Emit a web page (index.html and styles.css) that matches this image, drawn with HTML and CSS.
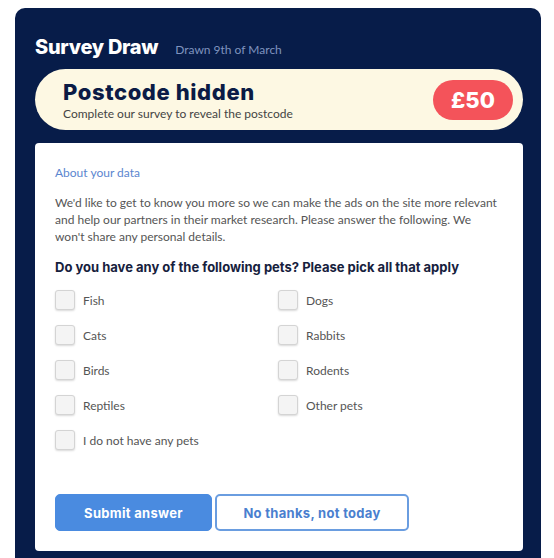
FILE: index.html
```html
<!DOCTYPE html>
<html lang="en">
<head>
    <meta charset="UTF-8">
    <meta name="viewport" content="width=device-width, initial-scale=1.0">
    <title>Survey Draw</title>
    <link rel="stylesheet" href="styles.css">
</head>
<body>

    <div class="panel">
        <div class="panel-header">
            <h2>Survey Draw</h2>
            <span class="drawn">Drawn 9th of March</span>
        </div>

        <div class="prize">
            <div class="prize-text">
                <h3>Postcode hidden</h3>
                <p>Complete our survey to reveal the postcode</p>
            </div>
            <div class="amount">£50</div>
        </div>

        <div class="card">
            <p class="about">About your data</p>
            <p class="intro">We'd like to get to know you more so we can make the ads on the site more relevant and help our partners in their market research. Please answer the following. We won't share any personal details.</p>

            <h4>Do you have any of the following pets? Please pick all that apply</h4>

            <form id="survey-form">
                <div class="options">
                    <label class="option"><input type="checkbox"><span class="box"></span>Fish</label>
                    <label class="option"><input type="checkbox"><span class="box"></span>Dogs</label>
                    <label class="option"><input type="checkbox"><span class="box"></span>Cats</label>
                    <label class="option"><input type="checkbox"><span class="box"></span>Rabbits</label>
                    <label class="option"><input type="checkbox"><span class="box"></span>Birds</label>
                    <label class="option"><input type="checkbox"><span class="box"></span>Rodents</label>
                    <label class="option"><input type="checkbox"><span class="box"></span>Reptiles</label>
                    <label class="option"><input type="checkbox"><span class="box"></span>Other pets</label>
                    <label class="option"><input type="checkbox"><span class="box"></span>I do not have any pets</label>
                </div>

                <div class="actions">
                    <button type="submit" class="btn-primary">Submit answer</button>
                    <button type="button" class="btn-outline">No thanks, not today</button>
                </div>
            </form>
        </div>
    </div>

</body>
</html>
```

FILE: styles.css
```css
body {
    margin: 0;
    background: #ffffff;
    font-family: "Lato", "Open Sans", sans-serif;
}
.panel {
    width: 526px;
    height: 550px;
    margin: 8px 0 0 15px;
    padding: 0 18px 0 20px;
    box-sizing: border-box;
    background: #071c49;
    border-radius: 10px 10px 0 0;
}
.panel-header {
    display: flex;
    align-items: baseline;
    padding: 27px 0 0 0;
    height: 42px;
    box-sizing: border-box;
}
.panel-header h2 {
    margin: 0;
    font-family: "Inter", sans-serif;
    font-weight: 800;
    font-size: 20px;
    letter-spacing: -0.3px;
    color: #ffffff;
    line-height: 24px;
}
.drawn {
    margin-left: 17px;
    font-size: 12px;
    color: #7f93bf;
}
.prize {
    display: flex;
    align-items: center;
    justify-content: space-between;
    margin-top: 19px;
    height: 61px;
    padding: 0 10px 0 28px;
    background: #fdf8e3;
    border-radius: 31px;
}
.prize-text h3 {
    margin: 0;
    font-family: "Inter", sans-serif;
    font-weight: 800;
    font-size: 22px;
    letter-spacing: 0.6px;
    line-height: 26px;
    color: #0b1b45;
}
.prize-text p {
    margin: 1px 0 0 0;
    font-size: 12px;
    color: #444444;
}
.amount {
    width: 80px;
    height: 40px;
    line-height: 40px;
    text-align: center;
    background: #f4535a;
    border-radius: 20px;
    color: #ffffff;
    font-family: "Inter", sans-serif;
    font-weight: 800;
    font-size: 22px;
}
.card {
    margin-top: 13px;
    padding: 22px 20px 20px 20px;
    background: #ffffff;
    border-radius: 4px;
}
.about {
    margin: 0;
    font-size: 12px;
    color: #5b86cf;
}
.intro {
    margin: 14px 0 0 0;
    font-size: 12px;
    line-height: 17px;
    color: #555555;
}
.card h4 {
    margin: 14px 0 0 0;
    font-family: "Inter", sans-serif;
    font-weight: 700;
    font-size: 13px;
    color: #16213d;
}
.options {
    display: grid;
    grid-template-columns: 223px 1fr;
    row-gap: 15px;
    margin-top: 15px;
}
.option {
    display: flex;
    align-items: center;
    height: 20px;
    font-size: 12px;
    color: #555555;
    cursor: pointer;
}
.option input {
    display: none;
}
.box {
    width: 18px;
    height: 18px;
    margin-right: 8px;
    border: 1px solid #d4d4d4;
    border-radius: 3px;
    background: #f4f4f4;
    box-shadow: 0 1px 2px rgba(0, 0, 0, 0.15);
}
.actions {
    display: flex;
    gap: 3px;
    margin-top: 44px;
}
.actions button {
    height: 37px;
    border-radius: 5px;
    font-family: "Inter", sans-serif;
    font-weight: 700;
    font-size: 13px;
    letter-spacing: 0.3px;
    cursor: pointer;
}
.btn-primary {
    width: 157px;
    background: #4a8be0;
    border: 1px solid #4a8be0;
    color: #ffffff;
}
.btn-outline {
    width: 194px;
    background: #ffffff;
    border: 2px solid #6a9de0;
    color: #4a7fcf;
}
```
